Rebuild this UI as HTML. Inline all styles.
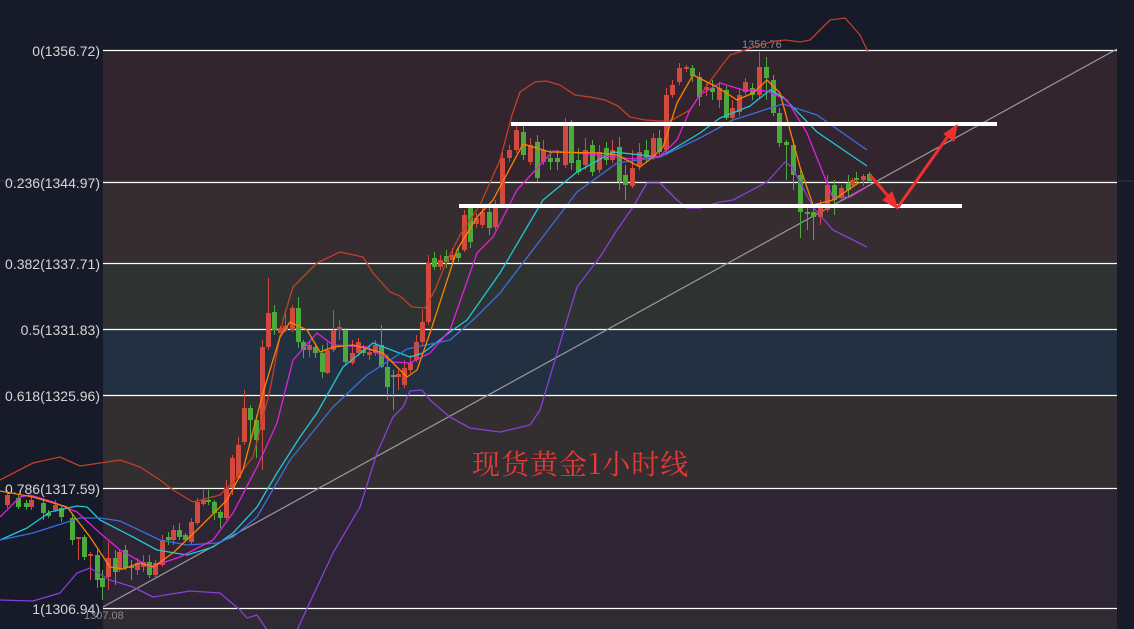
<!DOCTYPE html>
<html><head><meta charset="utf-8"><style>
html,body{margin:0;padding:0;background:#161a29;}
svg{display:block}
.lb{font-family:"Liberation Sans",sans-serif;font-size:14px;fill:#d6d6d6;}
</style></head><body>
<svg width="1134" height="629" viewBox="0 0 1134 629" xmlns="http://www.w3.org/2000/svg">
<rect width="1134" height="629" fill="#161a29"/>
<rect x="103" y="50" width="1014" height="132" fill="#33252d"/>
<rect x="103" y="182" width="1014" height="81" fill="#352d2f"/>
<rect x="103" y="263" width="1014" height="66" fill="#2e3331"/>
<rect x="103" y="329" width="1014" height="66" fill="#233041"/>
<rect x="103" y="395" width="1014" height="93" fill="#332e2f"/>
<rect x="103" y="488" width="1014" height="120" fill="#2d2533"/>
<rect x="103" y="608" width="1014" height="21" fill="#302a33"/>
<line x1="0" y1="181" x2="1134" y2="181" stroke="#3a3440" stroke-width="1"/>
<g stroke="#fff" stroke-width="1.3">
<line x1="103" y1="50.5" x2="1117" y2="50.5"/>
<line x1="103" y1="182.5" x2="1117" y2="182.5"/>
<line x1="103" y1="263.5" x2="1117" y2="263.5"/>
<line x1="103" y1="329.5" x2="1117" y2="329.5"/>
<line x1="103" y1="395.5" x2="1117" y2="395.5"/>
<line x1="103" y1="488.5" x2="1117" y2="488.5"/>
<line x1="103" y1="608.5" x2="1117" y2="608.5"/>
</g>
<g class="lb" text-anchor="end">
<text x="100" y="56">0(1356.72)</text>
<text x="100" y="188">0.236(1344.97)</text>
<text x="100" y="269">0.382(1337.71)</text>
<text x="100" y="335">0.5(1331.83)</text>
<text x="100" y="401">0.618(1325.96)</text>
<text x="100" y="494">0.786(1317.59)</text>
<text x="100" y="614">1(1306.94)</text>
</g>
<text x="742" y="48" font-family="Liberation Sans,sans-serif" font-size="11" fill="#8a8c94">1356.76</text>
<text x="84" y="619" font-family="Liberation Sans,sans-serif" font-size="11" fill="#8a8c94">1307.08</text>
<line x1="103" y1="607" x2="1117" y2="49" stroke="#9a9a9a" stroke-width="1.2"/>

<path fill="none" stroke="#d24a3e" stroke-width="1" d="M7.5 490V508 M31.5 495V510 M55.5 500V512 M78.5 537V560 M90.5 552V580 M108.5 542V590 M119.5 550V572 M137.5 558V575 M143.5 555V572 M155.5 560V577 M162.5 535V567 M173.5 525V545 M191.5 518V545 M197.5 498V525 M203.5 490V506 M226.5 480V520 M232.5 455V495 M238.5 437V480 M244.5 390V445 M262.5 340V470 M268.5 278V350 M280.5 326V335 M285.5 310V332 M292.5 305V332 M309.5 342V357 M327.5 342V374 M333.5 310V352 M339.5 320V340 M352.5 340V365 M358.5 338V356 M369.5 345V360 M375.5 340V356 M398.5 370V390 M404.5 360V388 M410.5 355V373 M416.5 335V362 M422.5 310V345 M428.5 255V325 M440.5 255V270 M452.5 248V265 M464.5 210V252 M476.5 213V228 M482.5 208V228 M495.5 200V230 M502.5 152V208 M509.5 145V162 M516.5 124V153 M530.5 138V165 M543.5 140V165 M565.5 118V168 M585.5 138V170 M599.5 145V173 M612.5 140V163 M632.5 150V188 M639.5 143V170 M653.5 133V160 M666.5 88V155 M672.5 80V98 M679.5 63V85 M686.5 65V72 M706.5 83V96 M719.5 82V108 M732.5 100V120 M739.5 88V116 M745.5 78V95 M759.5 52V98 M820.5 200V225 M827.5 175V212 M841.5 185V200 M852.5 178V187 M863.5 174V186"/>
<path fill="#d24a3e" d="M5 495h5v10h-5z M29 500h5v7h-5z M53 505h5v5h-5z M76 537h5v2h-5z M88 554h5v2h-5z M106 558h5v19h-5z M117 552h5v18h-5z M135 563h5v7h-5z M141 562h5v5h-5z M153 563h5v12h-5z M160 540h5v25h-5z M171 530h5v10h-5z M189 522h5v20h-5z M195 502h5v21h-5z M201 500h5v4h-5z M224 488h5v30h-5z M230 458h5v30h-5z M236 445h5v33h-5z M242 408h5v34h-5z M260 347h5v83h-5z M266 313h5v34h-5z M278 328h5v5h-5z M283 326h5v4h-5z M290 308h5v22h-5z M307 345h5v5h-5z M325 350h5v23h-5z M331 330h5v20h-5z M337 327h5v3h-5z M350 353h5v10h-5z M356 342h5v11h-5z M367 352h5v3h-5z M373 345h5v8h-5z M396 374h5v3h-5z M402 368h5v17h-5z M408 363h5v7h-5z M414 342h5v18h-5z M420 322h5v20h-5z M426 263h5v59h-5z M438 260h5v7h-5z M450 255h5v5h-5z M462 215h5v35h-5z M474 218h5v6h-5z M480 212h5v13h-5z M493 205h5v22h-5z M500 158h5v47h-5z M507 150h5v8h-5z M514 130h5v20h-5z M528 145h5v17h-5z M541 150h5v12h-5z M563 125h5v40h-5z M583 150h5v15h-5z M597 152h5v18h-5z M610 150h5v10h-5z M630 168h5v18h-5z M637 152h5v13h-5z M651 138h5v19h-5z M664 95h5v55h-5z M670 85h5v10h-5z M677 68h5v14h-5z M684 67h5v2h-5z M704 87h5v3h-5z M717 88h5v12h-5z M730 108h5v10h-5z M737 95h5v17h-5z M743 82h5v10h-5z M757 67h5v28h-5z M818 207h5v10h-5z M825 185h5v25h-5z M839 188h5v10h-5z M850 180h5v5h-5z M861 176h5v4h-5z"/>
<path fill="none" stroke="#4caa3c" stroke-width="1" d="M18.5 495V509 M26.5 500V510 M43.5 498V520 M48.5 510V518 M61.5 505V522 M72.5 515V545 M84.5 535V560 M97.5 550V588 M102.5 570V600 M115.5 550V585 M125.5 545V570 M131.5 560V580 M149.5 555V578 M168.5 532V545 M179.5 523V540 M185.5 533V542 M208.5 490V505 M214.5 500V520 M220.5 510V528 M250.5 405V440 M256.5 415V458 M274.5 305V335 M298.5 297V348 M303.5 340V358 M315.5 345V358 M322.5 345V378 M345.5 328V365 M363.5 345V356 M381.5 325V368 M387.5 355V400 M393.5 370V410 M434.5 252V270 M446.5 250V268 M458.5 248V262 M470.5 205V248 M489.5 205V235 M523.5 125V160 M537.5 135V182 M550.5 150V170 M557.5 150V170 M571.5 120V170 M578.5 148V175 M592.5 140V176 M606.5 142V165 M619.5 137V190 M625.5 165V200 M646.5 140V162 M659.5 130V155 M692.5 65V82 M699.5 72V106 M712.5 80V100 M726.5 86V120 M752.5 83V100 M766.5 57V100 M773.5 75V116 M779.5 108V147 M786.5 140V180 M793.5 140V190 M800.5 170V238 M807.5 205V230 M813.5 205V240 M834.5 180V215 M848.5 175V198 M856.5 172V185 M869.5 172V183"/>
<path fill="#4caa3c" d="M16 498h5v9h-5z M24 503h5v4h-5z M41 503h5v10h-5z M46 513h5v3h-5z M59 508h5v9h-5z M70 518h5v22h-5z M82 537h5v20h-5z M95 555h5v25h-5z M100 578h5v9h-5z M113 558h5v14h-5z M123 550h5v18h-5z M129 566h5v2h-5z M147 562h5v13h-5z M166 537h5v3h-5z M177 530h5v7h-5z M183 535h5v5h-5z M206 500h5v2h-5z M212 502h5v11h-5z M218 512h5v6h-5z M248 408h5v12h-5z M254 420h5v20h-5z M272 312h5v18h-5z M296 308h5v34h-5z M301 342h5v8h-5z M313 347h5v6h-5z M320 353h5v19h-5z M343 330h5v32h-5z M361 350h5v3h-5z M379 345h5v22h-5z M385 367h5v20h-5z M391 375h5v2h-5z M432 258h5v9h-5z M444 256h5v6h-5z M456 253h5v5h-5z M468 208h5v34h-5z M487 212h5v16h-5z M521 132h5v23h-5z M535 142h5v36h-5z M548 158h5v4h-5z M555 158h5v4h-5z M569 125h5v38h-5z M576 160h5v12h-5z M590 145h5v27h-5z M604 148h5v12h-5z M617 147h5v35h-5z M623 175h5v10h-5z M644 150h5v8h-5z M657 138h5v14h-5z M690 68h5v8h-5z M697 77h5v20h-5z M710 88h5v4h-5z M724 90h5v28h-5z M750 88h5v7h-5z M764 67h5v11h-5z M771 80h5v33h-5z M777 113h5v30h-5z M784 142h5v3h-5z M791 145h5v30h-5z M798 175h5v37h-5z M805 212h5v2h-5z M811 212h5v5h-5z M832 185h5v15h-5z M846 183h5v7h-5z M854 178h5v2h-5z M867 174h5v7h-5z"/>

<g fill="none" stroke-width="1.3" stroke-linejoin="round">
<polyline stroke="#c0402a" points="0,480 33,463 60,457 80,466 100,463 120,460 140,467 160,480 173,490 193,502 220,495 233,482 253,457 270,390 283,320 293,287 317,263 340,252 363,257 373,273 390,292 400,296 412,307 425,308 435,290 445,265 460,235 480,205 500,160 512,115 520,92 535,82 546,81 560,85 575,95 590,97 605,100 618,106 630,117 645,120 660,121 670,121 690,110 700,95 720,68 730,55 745,50 760,45 775,41 785,40 800,42 810,40 830,20 845,18 860,35 868,52"/>
<polyline stroke="#8a3fd8" points="0,600 33,601 60,593 77,573 90,568 110,580 133,587 153,597 190,591 220,593 240,610 247,618 257,615 267,630 297,630 333,553 360,507 377,453 393,417 403,407 410,391 422,390 430,400 450,417 470,428 500,432 530,425 540,410 555,360 567,320 577,287 600,257 617,230 633,207 647,183 660,183 677,200 687,208 700,208 720,202 733,200 767,182 785,162 792,167 813,207 833,230 867,247"/>
<polyline stroke="#1fc8d8" points="0,540 27,528 50,512 77,506 87,507 100,520 133,537 157,550 187,555 213,547 233,533 257,507 277,473 300,437 317,413 343,367 373,343 410,357 423,353 450,332 467,320 500,273 543,200 577,172 613,152 660,157 700,133 720,118 750,106 770,90 783,97 817,132 867,166"/>
<polyline stroke="#3b6fe0" points="0,540 33,533 80,518 100,518 120,521 160,540 187,545 217,543 233,537 257,517 290,460 333,407 367,375 407,349 450,340 473,320 500,293 577,192 617,163 660,157 700,138 733,120 783,104 817,115 867,150"/>
<polyline stroke="#e020e0" points="0,517 20,497 30,495 53,502 77,512 100,533 120,550 150,567 180,557 213,540 233,513 257,467 277,423 293,360 317,333 333,345 367,347 393,362 410,363 430,353 450,330 477,253 493,237 517,190 553,151 577,153 607,156 633,159 660,156 677,140 690,110 700,95 720,83 743,90 767,91 787,100 807,133 833,198 850,197 867,187"/>
<polyline stroke="#ff8000" points="0,491 33,497 67,507 90,537 110,567 123,569 140,563 153,567 173,553 200,527 227,500 243,470 263,393 280,337 290,322 307,330 320,352 333,347 353,345 383,353 407,377 417,370 430,333 457,250 477,217 493,200 523,144 550,152 600,153 617,155 640,167 653,157 663,147 677,103 693,75 717,87 737,100 753,93 767,80 780,93 800,167 813,205 833,200 860,182"/>
</g>
<rect x="511" y="122" width="486" height="4" fill="#fff"/>
<rect x="459" y="204" width="503" height="4" fill="#fff"/>
<g stroke="#f03030" stroke-width="3" fill="#f03030">
<line x1="870" y1="175" x2="893" y2="202"/>
<polygon points="898,209 883,200 892,192" stroke-width="1"/>
<line x1="898" y1="207" x2="951" y2="132"/>
<polygon points="957,125 954,141 944,134" stroke-width="1"/>
</g>
<text x="472" y="474" font-family="'Noto Serif CJK SC','Liberation Serif',serif" font-size="28" letter-spacing="1" fill="#e83838">现货黄金1小时线</text>
</svg>
</body></html>
